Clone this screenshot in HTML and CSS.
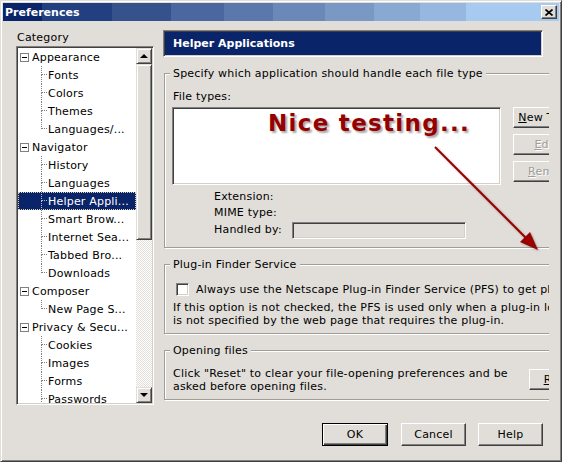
FILE: index.html
```html
<!DOCTYPE html>
<html lang="en">
<head>
    <meta charset="UTF-8">
    <title>Preferences</title>
    <link rel="stylesheet" href="styles.css">
</head>
<body>
    <div class="window">
        <div class="titlebar">
            <span class="title">Preferences</span>
            <span class="close-btn">
                <svg width="8" height="7" viewBox="0 0 8 7"><path d="M0.5 0.5 L7.5 6.5 M7.5 0.5 L0.5 6.5" stroke="#000" stroke-width="1.7"/></svg>
            </span>
        </div>

        <div class="content">
            <div class="sidebar">
                <div class="cat-label">Category</div>
                <div class="tree">
                    <ul class="tree-list">
                        <li class="tree-row"><span class="expander"></span>Appearance</li>
                        <li class="tree-row"><span class="twig"></span>Fonts</li>
                        <li class="tree-row"><span class="twig"></span>Colors</li>
                        <li class="tree-row"><span class="twig"></span>Themes</li>
                        <li class="tree-row last"><span class="twig"></span>Languages/...</li>
                        <li class="tree-row"><span class="expander"></span>Navigator</li>
                        <li class="tree-row"><span class="twig"></span>History</li>
                        <li class="tree-row"><span class="twig"></span>Languages</li>
                        <li class="tree-row selected"><span class="twig"></span>Helper Appli...</li>
                        <li class="tree-row"><span class="twig"></span>Smart Brow...</li>
                        <li class="tree-row"><span class="twig"></span>Internet Sea...</li>
                        <li class="tree-row"><span class="twig"></span>Tabbed Bro...</li>
                        <li class="tree-row last"><span class="twig"></span>Downloads</li>
                        <li class="tree-row"><span class="expander"></span>Composer</li>
                        <li class="tree-row last"><span class="twig"></span>New Page S...</li>
                        <li class="tree-row"><span class="expander"></span>Privacy &amp; Secu...</li>
                        <li class="tree-row"><span class="twig"></span>Cookies</li>
                        <li class="tree-row"><span class="twig"></span>Images</li>
                        <li class="tree-row"><span class="twig"></span>Forms</li>
                        <li class="tree-row"><span class="twig"></span>Passwords</li>
                    </ul>
                    <div class="scrollbar">
                        <div class="sb-btn up"></div>
                        <div class="sb-thumb"></div>
                        <div class="sb-track"></div>
                        <div class="sb-btn down"></div>
                    </div>
                </div>
            </div>

            <div class="main">
                <div class="panel-header">Helper Applications</div>

                <div class="group group-files">
                    <div class="legend">Specify which application should handle each file type</div>
                    <div class="field-label">File types:</div>
                    <div class="file-row">
                        <div class="listbox"></div>
                        <div class="side-buttons">
                            <button class="btn"><u>N</u>ew Type...</button>
                            <button class="btn" disabled><u>E</u>dit...</button>
                            <button class="btn" disabled><u>R</u>emove</button>
                        </div>
                    </div>
                    <div class="details">
                        <span>Extension:</span><span></span>
                        <span>MIME type:</span><span></span>
                        <span>Handled by:</span><span class="textfield"></span>
                    </div>
                </div>

                <div class="group">
                    <div class="legend">Plug-in Finder Service</div>
                    <div class="check-row">
                        <span class="checkbox"></span>
                        Always use the Netscape Plug-in Finder Service (PFS) to get plug-ins
                    </div>
                    <p class="note-text">If this option is not checked, the PFS is used only when a plug-in location<br>is not specified by the web page that requires the plug-in.</p>
                </div>

                <div class="group">
                    <div class="legend">Opening files</div>
                    <div class="reset-row">
                        <p class="reset-text">Click "Reset" to clear your file-opening preferences and be asked before opening files.</p>
                        <button class="btn btn-reset"><u>R</u>eset</button>
                    </div>
                </div>
            </div>
        </div>

        <div class="footer">
            <button class="btn btn-footer btn-default">OK</button>
            <button class="btn btn-footer">Cancel</button>
            <button class="btn btn-footer">Help</button>
        </div>

        <!-- annotation drawn on top of the screenshot -->
        <div class="note">Nice testing...</div>
        <svg class="arrow" width="562" height="462" viewBox="0 0 562 462">
            <line x1="435" y1="147" x2="527" y2="239" stroke="#990000" stroke-width="2"/>
            <polygon points="538,250 520,242 530,232" fill="#990000"/>
        </svg>
    </div>
</body>
</html>
```

FILE: styles.css
```css
body {
    margin: 0;
    font-family: "DejaVu Sans", Verdana, sans-serif;
    font-size: 11px;
    letter-spacing: 0.2px;
    color: #000;
    background: #fff;
}

.window {
    position: relative;
    width: 562px;
    height: 462px;
    box-sizing: border-box;
    background: #e1ded9;
    border: 1px solid;
    border-color: #e1ded9 #404040 #404040 #e1ded9;
    box-shadow: inset 1px 1px #fff, inset -1px -1px #808080;
    padding: 2px;
    display: flex;
    flex-direction: column;
}

.titlebar {
    height: 18px;
    flex-shrink: 0;
    display: flex;
    align-items: center;
    justify-content: space-between;
    padding: 0 2px;
    background: linear-gradient(to right,
        #0a246a 0 39px, #223f80 39px 109px, #35528d 109px 168px,
        #4a679f 168px 221px, #5a78ac 221px 270px, #6a88b8 270px 322px,
        #7a98c4 322px 371px, #88a9d2 371px 417px, #96b8e0 417px 463px,
        #a6caf0 463px);
}

.title {
    color: #fff;
    font-weight: bold;
    letter-spacing: 0;
}

.close-btn {
    width: 16px;
    height: 14px;
    box-sizing: border-box;
    background: #e1ded9;
    border: 1px solid;
    border-color: #fff #404040 #404040 #fff;
    box-shadow: inset -1px -1px #808080;
    display: flex;
    align-items: center;
    justify-content: center;
}

.content {
    height: 402px;
    flex-shrink: 0;
    display: flex;
}

/* left category tree */
.sidebar {
    margin-left: 13px;
    width: 138px;
}

.cat-label {
    margin-top: 10px;
    margin-bottom: 1px;
    padding-left: 1px;
    line-height: 14px;
}

.tree {
    height: 359px;
    box-sizing: border-box;
    background: #fff;
    border: 1px solid;
    border-color: #808080 #fff #fff #808080;
    box-shadow: inset 1px 1px #404040, inset -1px -1px #d4d0c8;
    padding: 1px;
    display: flex;
}

.tree-list {
    flex: 1;
    overflow: hidden;
    list-style: none;
    margin: 0;
    padding: 0;
}

.tree-row {
    height: 18px;
    display: flex;
    align-items: center;
    white-space: nowrap;
}

.expander {
    width: 9px;
    height: 9px;
    box-sizing: border-box;
    border: 1px solid #808080;
    margin: 0 3px 0 2px;
    display: flex;
    align-items: center;
    justify-content: center;
}

.expander::after {
    content: "";
    width: 5px;
    height: 1px;
    background: #000;
}

.twig {
    width: 6px;
    height: 18px;
    margin: 0 1px 0 23px;
    display: flex;
    flex-direction: column;
}

.twig::before {
    content: "";
    height: 8px;
    border-left: 1px dotted #808080;
    border-bottom: 1px dotted #808080;
}

.twig::after {
    content: "";
    flex: 1;
    border-left: 1px dotted #808080;
}

.tree-row.last .twig::after {
    border-left: none;
}

.tree-row.selected {
    background: #0a246a;
    color: #fff;
    outline: 1px dotted #d8d4b0;
    outline-offset: -1px;
}

.tree-row.selected .twig::before,
.tree-row.selected .twig::after {
    border-color: #b8bcd0;
}

.scrollbar {
    width: 16px;
    display: flex;
    flex-direction: column;
}

.sb-btn,
.sb-thumb {
    box-sizing: border-box;
    background: #e1ded9;
    border: 1px solid;
    border-color: #e1ded9 #404040 #404040 #e1ded9;
    box-shadow: inset 1px 1px #fff, inset -1px -1px #808080;
}

.sb-btn {
    height: 16px;
    display: flex;
    align-items: center;
    justify-content: center;
}

.sb-btn::after {
    content: "";
    border-left: 4px solid transparent;
    border-right: 4px solid transparent;
}

.sb-btn.up::after {
    border-bottom: 4px solid #000;
}

.sb-btn.down::after {
    border-top: 4px solid #000;
}

.sb-thumb {
    height: 176px;
}

.sb-track {
    flex: 1;
    background: repeating-conic-gradient(#fff 0 25%, #e1ded9 0 50%) 0 0 / 2px 2px;
}

/* right panel */
.main {
    margin-left: 9px;
    width: 386px;
    overflow: hidden;
    padding-top: 9px;
}

.panel-header {
    width: 380px;
    height: 27px;
    box-sizing: border-box;
    background: #0a246a;
    color: #fff;
    font-weight: bold;
    letter-spacing: 0;
    border: 1px solid;
    border-color: #808080 #fff #fff #808080;
    box-shadow: inset 1px 1px #404040, inset -1px -1px #d4d0c8;
    padding: 0 0 1px 9px;
    display: flex;
    align-items: center;
}

.group {
    width: 440px;
    box-sizing: border-box;
    margin: 16px 0 0 1px;
    border: 1px solid #a09d96;
    box-shadow: inset 1px 1px #fff, 1px 1px #fff;
    padding: 0 0 6px 8px;
}

.group-files {
    padding-bottom: 8px;
}

.legend {
    width: fit-content;
    margin: -7px 0 0 -3px;
    padding: 0 3px;
    background: #e1ded9;
    line-height: 14px;
}

.field-label {
    margin-top: 9px;
    line-height: 14px;
}

.file-row {
    display: flex;
    margin-top: 3px;
}

.listbox {
    width: 329px;
    height: 78px;
    margin-left: -1px;
    box-sizing: border-box;
    background: #fff;
    border: 1px solid;
    border-color: #808080 #fff #fff #808080;
    box-shadow: inset 1px 1px #404040, inset -1px -1px #d4d0c8;
}

.side-buttons {
    margin-left: 12px;
    display: flex;
    flex-direction: column;
    gap: 6px;
}

.btn {
    width: 76px;
    height: 21px;
    box-sizing: border-box;
    padding: 0;
    font: inherit;
    letter-spacing: inherit;
    color: #000;
    background: #e1ded9;
    border: 1px solid;
    border-color: #fff #404040 #404040 #fff;
    box-shadow: inset -1px -1px #808080;
    text-align: center;
}

.btn:disabled {
    color: #a09d96;
    text-shadow: 1px 1px #fff;
}

.details {
    display: grid;
    grid-template-columns: 78px 174px;
    grid-template-rows: 16px 16px 19px;
    align-items: center;
    margin: 3px 0 0 41px;
}

.textfield {
    height: 17px;
    align-self: end;
    box-sizing: border-box;
    border: 1px solid;
    border-color: #808080 #fff #fff #808080;
    box-shadow: inset 1px 1px #404040, inset -1px -1px #d4d0c8;
}

.check-row {
    display: flex;
    align-items: center;
    height: 14px;
    margin-top: 10px;
    white-space: nowrap;
}

.checkbox {
    width: 13px;
    height: 13px;
    flex-shrink: 0;
    box-sizing: border-box;
    margin: 0 7px 0 3px;
    background: #fff;
    border: 1px solid;
    border-color: #808080 #fff #fff #808080;
    box-shadow: inset 1px 1px #404040, inset -1px -1px #d4d0c8;
}

.note-text {
    margin: 5px 0 0;
    line-height: 13px;
    white-space: nowrap;
}

.reset-row {
    display: flex;
    align-items: flex-start;
    margin-top: 9px;
}

.reset-text {
    width: 350px;
    margin: 0;
    line-height: 13px;
}

.btn-reset {
    width: 61px;
    flex-shrink: 0;
    margin: 2px 0 0 6px;
}

/* bottom buttons */
.footer {
    display: flex;
    justify-content: flex-end;
    gap: 12px;
    padding-right: 16px;
}

.btn-footer {
    width: 65px;
    height: 23px;
}

.btn-default {
    width: 66px;
    margin-right: 1px;
    border-color: #000;
    box-shadow: inset 1px 1px #fff, inset -1px -1px #404040, inset -2px -2px #808080;
}

/* red annotation over the dialog */
.note {
    position: absolute;
    left: 267px;
    top: 111px;
    font-size: 23px;
    line-height: 23px;
    font-weight: bold;
    letter-spacing: 1.3px;
    color: #960000;
    text-shadow: 2px 2px 2px rgba(0, 0, 0, 0.35);
    white-space: nowrap;
}

.arrow {
    position: absolute;
    left: -1px;
    top: -1px;
    pointer-events: none;
    filter: drop-shadow(1px 1px 1px rgba(0, 0, 0, 0.3));
}
```
